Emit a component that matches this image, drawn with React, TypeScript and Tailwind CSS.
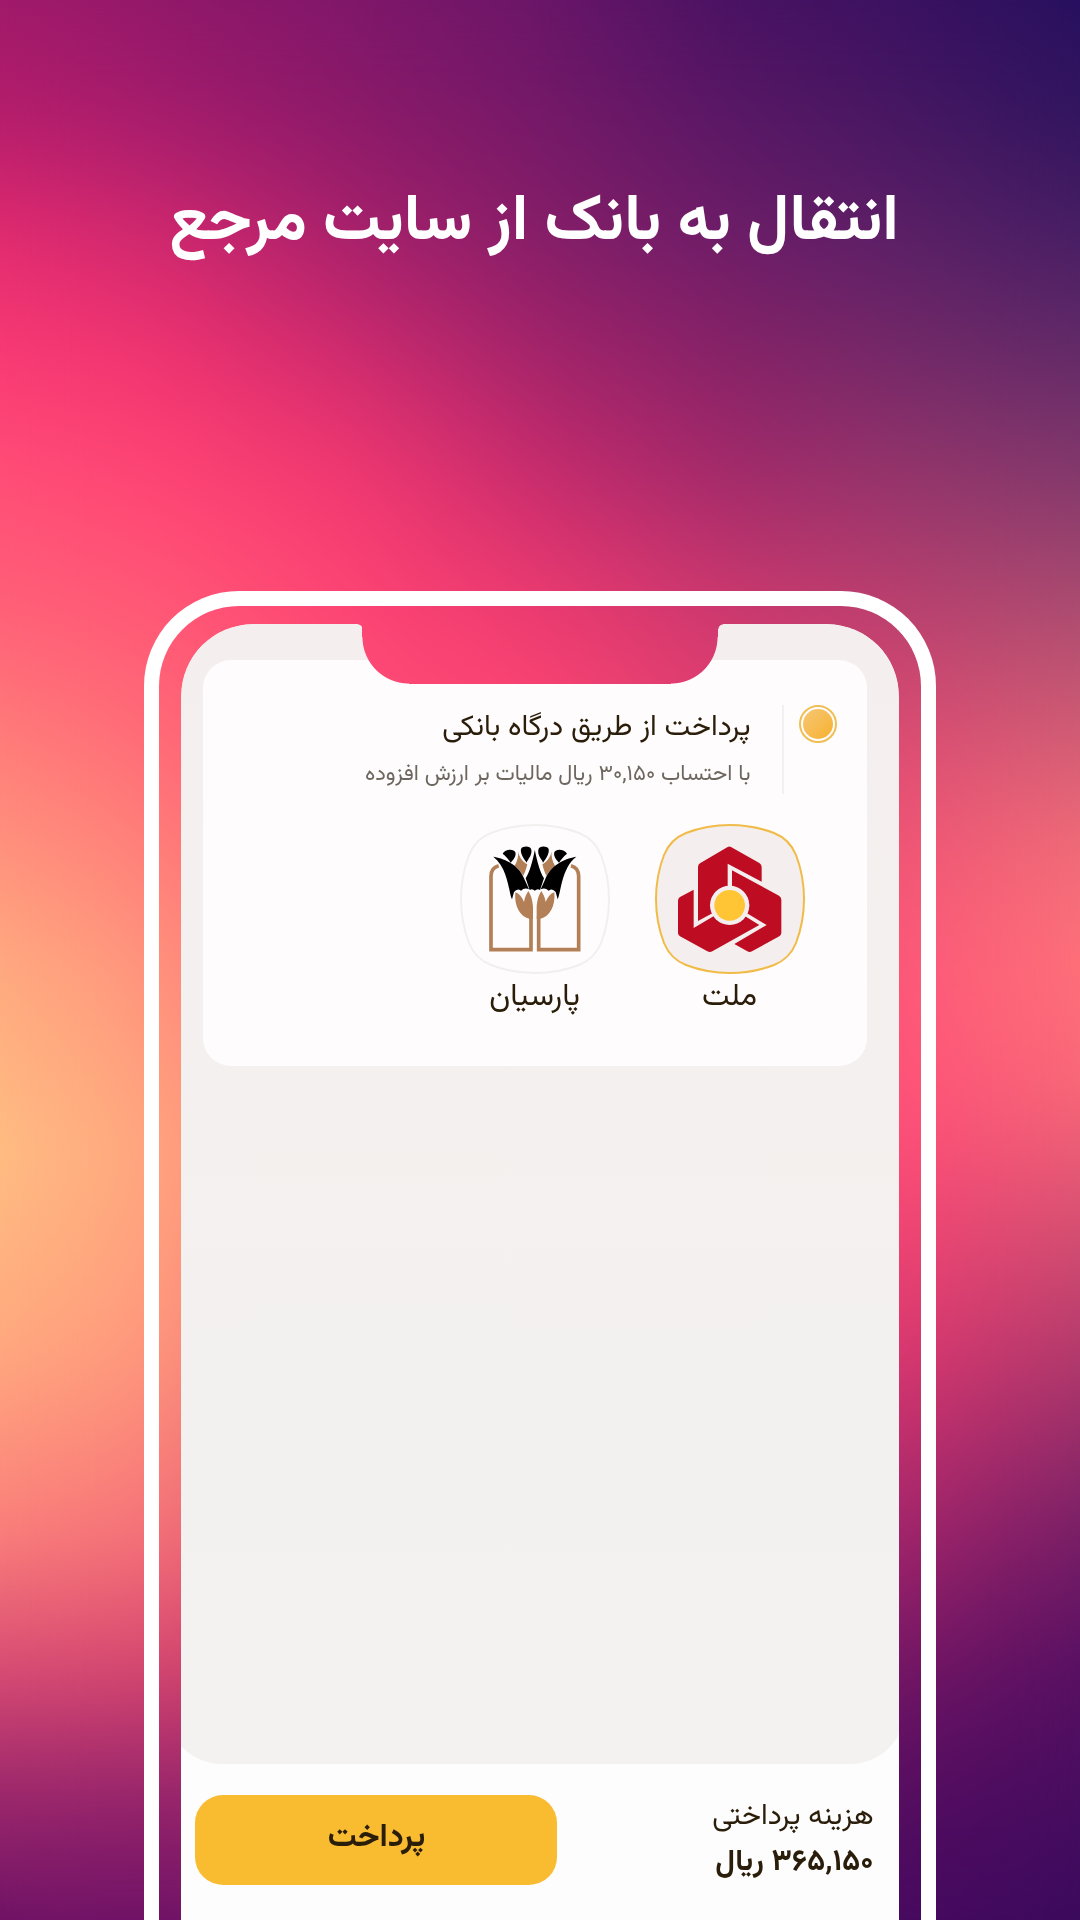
import { useState } from "react";

const backdropLayers = [
  "bg-[linear-gradient(#a01a6a_0%,#b81e6c_6.25%,#e42c70_12.5%,#fb3c75_18.75%,#ff4f77_25%,#ff6078_31.25%,#ff7a7a_37.5%,#ffab80_50%,#ffc083_60%,#ffab7f_70%,#fb7f7b_80%,#d84c74_87%,#a02a6c_93%,#6e1266_100%)]",
  "bg-[linear-gradient(#8e1869_0%,#a41c6c_6.25%,#cf286e_12.5%,#f03370_18.75%,#ff4474_25%,#ff5576_31.25%,#ff6676_37.5%,#ff8f7c_50%,#ffa27e_60%,#ff957c_70%,#f57078_80%,#d6446e_87%,#9a266c_93%,#6a1066_100%)] [mask-image:linear-gradient(to_right,transparent_0%,#000_16%)]",
  "bg-[linear-gradient(#7e176a_0%,#8c1a69_6.25%,#a8216b_12.5%,#d02b6e_18.75%,#f23871_25%,#fd4373_31.25%,#ff4d76_37.5%,#ff6a76_60%,#8a1f68_100%)] [mask-image:linear-gradient(to_right,transparent_16%,#000_33%)]",
  "bg-[linear-gradient(#691668_0%,#761968_6.25%,#861e68_12.5%,#a5246a_18.75%,#c92c6d_25%,#eb3a70_31.25%,#fc4573_37.5%,#ff5a76_60%,#7a1866_100%)] [mask-image:linear-gradient(to_right,transparent_33%,#000_50%)]",
  "bg-[linear-gradient(#491263_0%,#5a1865_6.25%,#6e1d68_12.5%,#882267_18.75%,#a42a6a_25%,#cb386e_31.25%,#e03e70_37.5%,#ff5076_60%,#5a1064_100%)] [mask-image:linear-gradient(to_right,transparent_50%,#000_67%)]",
  "bg-[linear-gradient(#3a1261_0%,#481762_6.25%,#5c2066_12.5%,#752968_18.75%,#96356b_25%,#b83f6e_31.25%,#d84a72_37.5%,#f05575_43.75%,#fd5878_50%,#ff5278_56.25%,#fd4b77_60%,#df386f_70%,#a4246a_80%,#731564_87%,#560c60_93%,#460a60_100%)] [mask-image:linear-gradient(to_right,transparent_67%,#000_83%)]",
  "bg-[linear-gradient(#26105f_0%,#32165f_6.25%,#481f64_12.5%,#642c68_18.75%,#843a6c_25%,#a84c70_31.25%,#cc5c74_37.5%,#ee6c78_43.75%,#fe727a_50%,#f86a78_56.25%,#e85e75_60%,#b23c6c_70%,#741e66_80%,#561062_87%,#480e60_93%,#3a0a5c_100%)] [mask-image:linear-gradient(to_right,transparent_83%,#000_100%)]",
];

function MeshGradient() {
  return backdropLayers.map((layer) => <div key={layer} className={`absolute inset-0 ${layer}`} />);
}

// The sharp copy below keeps the window edges opaque where the blurred copy fades out.
function Backdrop() {
  return (
    <div aria-hidden="true" className="absolute inset-0 -z-10 overflow-hidden">
      <MeshGradient />
      <div className="absolute inset-0 blur-2xl">
        <MeshGradient />
      </div>
    </div>
  );
}

function MellatLogo() {
  return (
    <svg viewBox="47 43 450 450" className="absolute inset-0 size-full" aria-hidden="true">
      <g fill="#be0d22">
        <path d="M265 112Q270 109 275 112L360 160Q367 165 367 172V216L265 162V232L222 309L176 334V172Q176 165 182 161Z" />
        <path d="M278 182L419 258Q426 262 426 270V370Q426 376 420 380L338 425Q331 429 324 425L285 403L382 346L318 308L278 240Z" />
        <path d="M163 240L122 262Q116 266 116 273V370Q116 376 122 380L204 425Q212 429 219 425L360 346L315 318L225 318L163 355Z" />
      </g>
      <circle cx="271" cy="287" r="59" fill="#f4efee" />
      <circle cx="271" cy="287" r="46" fill="#ffc534" />
    </svg>
  );
}

function ParsianHalf() {
  return (
    <>
      <path d="M176 168C160 172 153 185 153 200V420H273V320" fill="none" stroke="#b27f56" strokeWidth="11" />
      <path
        fill="#b27f56"
        d="M226 248C222 290 240 322 270 328H279V292C278 270 272 255 265 244C258 255 254 265 252 277C246 262 238 252 226 248ZM234 125C238 145 250 158 262 164C258 180 254 190 250 198C242 185 232 175 224 168C232 155 236 140 234 125Z"
      />
      <path d="M160 141C185 145 235 160 254 210L267 239Q254 232 243 243Q232 234 222 247L216 269C206 250 205 175 160 141ZM188 132C195 118 222 116 226 128C230 140 218 153 212 159C205 148 198 140 188 132ZM243 118C248 108 272 108 274 120C277 138 262 150 260 159C252 148 240 132 243 118Z" />
    </>
  );
}

function ParsianLogo() {
  return (
    <svg viewBox="60 43 450 450" className="absolute inset-0 size-full" aria-hidden="true">
      <ParsianHalf />
      <g transform="translate(569 0) scale(-1 1)">
        <ParsianHalf />
      </g>
      <path d="M284.500 121C277 160 268 188 257 206L269 241Q277 235 284.500 243Q292 235 300 241L312 206C301 188 292 160 284.500 121Z" />
    </svg>
  );
}

const banks = [
  { id: "mellat", name: "ملت", Logo: MellatLogo },
  { id: "parsian", name: "پارسیان", Logo: ParsianLogo },
];

function BankOption({ bank, selected, onSelect }: { bank: (typeof banks)[number]; selected: boolean; onSelect: () => void }) {
  const { Logo } = bank;
  return (
    <label className="flex cursor-pointer flex-col items-center">
      <input type="radio" name="bank" value={bank.id} checked={selected} onChange={onSelect} className="sr-only" />
      <span className="relative block size-[150px]">
        <svg viewBox="0 0 150 150" className="size-full" aria-hidden="true">
          <path
            d="M75 1C58 1 44 4 31 9C21 13 13 21 9 31C4 44 1 58 1 75C1 92 4 106 9 119C13 129 21 137 31 141C44 146 58 149 75 149C92 149 106 146 119 141C129 137 137 129 141 119C146 106 149 92 149 75C149 58 146 44 141 31C137 21 129 13 119 9C106 4 92 1 75 1Z"
            fill={selected ? "#f4efee" : "none"}
            stroke={selected ? "#f0bb48" : "#f3efef"}
            strokeWidth="2"
          />
        </svg>
        <Logo />
      </span>
      <span className="text-[31px] leading-[48px]">{bank.name}</span>
    </label>
  );
}

export default function App() {
  const [bank, setBank] = useState("mellat");

  return (
    <main
      dir="rtl"
      className="relative isolate flex min-h-screen flex-col overflow-hidden font-[Vazirmatn,serif] text-[#2a1e0a]"
    >
      <Backdrop />
      <header className="pt-[173px] pr-6 pb-[318px] pl-3 text-center">
        <h1 className="text-[64px] leading-[100px] font-bold text-white">انتقال به بانک از سایت مرجع</h1>
      </header>

      <section className="mx-auto flex w-[73.25%] grow flex-col rounded-t-[95px] border-[15px] border-b-0 border-white px-[22px] pt-[18px]">
        <div className="flex grow flex-col overflow-hidden rounded-t-[72px] bg-[#fefdfe] [mask-composite:subtract,add,add,add,add,add,add] [mask-image:linear-gradient(#000,#000),linear-gradient(#000,#000),linear-gradient(#000,#000),radial-gradient(closest-side,#000_98%,transparent),radial-gradient(closest-side,#000_98%,transparent),radial-gradient(circle_at_0_100%,transparent_4px,#000_5px),radial-gradient(circle_at_100%_100%,transparent_4px,#000_5px)] [mask-position:0_0,50%_0,50%_0,calc(50%-131px)_-34px,calc(50%+131px)_-34px,calc(50%-180px)_0,calc(50%+180px)_0] [mask-repeat:no-repeat] [mask-size:100%_100%,356px_13px,262px_60px,94px_94px,94px_94px,5px_5px,5px_5px]">
          <div className="-mr-1.5 -ml-3.5 grow rounded-b-[55px] bg-linear-to-b from-[#f4efee] to-[#f3f2f0] pt-9 pr-[38px] pl-9">
            <div className="rounded-[28px] bg-[#fffcfd] pt-[45px] pr-[30px] pb-11">
              <div className="flex">
                <input
                  id="gateway"
                  type="radio"
                  name="method"
                  defaultChecked
                  className="size-[38px] shrink-0 appearance-none rounded-full border-2 border-[#efbf56] bg-linear-to-br from-[#f5c876] to-[#f8af1a] bg-clip-content p-[2px]"
                />
                <span className="mr-[15px] h-[89px] w-[2px] bg-[#f3f0f0]" />
                <label htmlFor="gateway" className="mr-[31px] flex flex-col">
                  <span className="text-[29px] leading-[46px]">پرداخت از طریق درگاه بانکی</span>
                  <span className="mt-1 text-[22px] leading-10 text-[#6d675f]">با احتساب ۳۰,۱۵۰ ریال مالیات بر ارزش افزوده</span>
                </label>
              </div>
              <div role="radiogroup" aria-label="بانک" className="mt-[29px] mr-8 flex gap-[45px]">
                {banks.map((item) => (
                  <BankOption key={item.id} bank={item} selected={bank === item.id} onSelect={() => setBank(item.id)} />
                ))}
              </div>
            </div>
          </div>
          <footer className="flex items-center justify-between pt-[30px] pr-[25px] pb-[34px] pl-[14px]">
            <p className="flex flex-col">
              <span className="text-[29px] leading-[46px]">هزینه پرداختی</span>
              <strong className="text-[30px] leading-[46px] font-bold">۳۶۵,۱۵۰ ریال</strong>
            </p>
            <button type="button" className="h-[90px] w-[362px] rounded-[28px] bg-[#f9bc31] pb-1 text-[32px] font-bold">
              پرداخت
            </button>
          </footer>
        </div>
      </section>
    </main>
  );
}
